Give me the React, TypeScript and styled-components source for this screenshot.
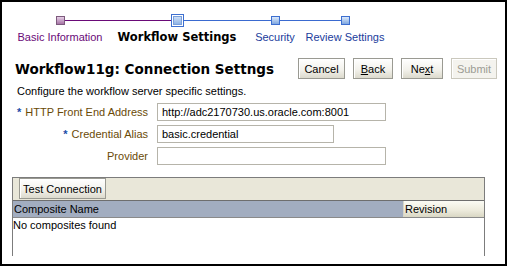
import React from "react";
import styled, { createGlobalStyle } from "styled-components";

const Global = createGlobalStyle`
  html, body { margin: 0; padding: 0; background: #fff; }
  body { font-family: "Liberation Sans", Arial, sans-serif; font-size: 11px; color: #000; }
`;

const Frame = styled.div`
  box-sizing: border-box;
  width: 507px;
  height: 266px;
  border: 2px solid #000;
  background: #fff;
  overflow: hidden;
  display: flex;
  flex-direction: column;
`;

const Train = styled.div`
  display: flex;
  padding: 12px 0 0 10px;
`;

type Kind = "visited" | "current" | "next";

const Step = styled.div<{ $w: number }>`
  width: ${(p) => p.$w}px;
  display: flex;
  flex-direction: column;
  align-items: stretch;
`;

const MarkerRow = styled.div`
  display: flex;
  align-items: center;
  height: 13px;
`;

const Line = styled.div<{ $color?: string }>`
  flex: 1;
  height: 1px;
  background: ${(p) => p.$color || "transparent"};
`;

const Square = styled.div<{ $kind: Kind }>`
  box-sizing: border-box;
  flex: none;
  width: ${(p) => (p.$kind === "current" ? 13 : 9)}px;
  height: ${(p) => (p.$kind === "current" ? 13 : 9)}px;
  border: 1px solid ${(p) => (p.$kind === "visited" ? "#7d5a7d" : "#3d6fd0")};
  background: ${(p) =>
    p.$kind === "visited"
      ? "linear-gradient(#e6d0e6, #a674a6)"
      : "linear-gradient(#dceafb, #7fa7e0)"};
  box-shadow: ${(p) => (p.$kind === "current" ? "inset 0 0 0 1px #fff, inset 0 0 0 2px #7aa0dc" : "none")};
`;

const StepLabel = styled.div<{ $kind: Kind }>`
  display: flex;
  justify-content: center;
  padding-top: 3px;
  white-space: nowrap;
  font-family: ${(p) => (p.$kind === "current" ? '"DejaVu Sans", Verdana, sans-serif' : '"Liberation Sans", Arial, sans-serif')};
  font-weight: ${(p) => (p.$kind === "current" ? "bold" : "normal")};
  font-size: ${(p) => (p.$kind === "current" ? "11.5px" : "11px")};
  line-height: 14px;
  color: ${(p) => (p.$kind === "visited" ? "#6a0a78" : p.$kind === "current" ? "#000" : "#1a3c9c")};
`;

const HeaderRow = styled.div`
  display: flex;
  align-items: center;
  justify-content: space-between;
  padding: 14px 8px 0 13px;
`;

const Title = styled.h1`
  margin: 0;
  font-family: "DejaVu Sans", Verdana, sans-serif;
  font-size: 13.5px;
  font-weight: bold;
  color: #000;
  white-space: nowrap;
`;

const ButtonBar = styled.div`
  display: flex;
  gap: 8px;
`;

const Button = styled.button<{ $w?: number }>`
  box-sizing: border-box;
  height: 21px;
  ${(p) => (p.$w ? `width: ${p.$w}px;` : "")}
  padding: 0 3px;
  white-space: nowrap;
  font-family: "Liberation Sans", Arial, sans-serif;
  font-size: 11px;
  color: ${(p) => (p.disabled ? "#9c9c94" : "#000")};
  background: ${(p) =>
    p.disabled ? "#f4f3ee" : "linear-gradient(#ffffff, #f3f2ec 55%, #dcdacd)"};
  border: 1px solid ${(p) => (p.disabled ? "#cac8bd" : "#9a9a92")};
  box-shadow: inset 1px 1px 0 #fff;
  border-radius: 0;
  cursor: default;
`;

const Description = styled.div`
  padding: 6px 0 0 15px;
  font-size: 11px;
  line-height: 13px;
`;

const Form = styled.div`
  display: grid;
  grid-template-columns: 146px auto;
  column-gap: 9px;
  row-gap: 4px;
  padding-top: 5px;
  align-items: center;
  justify-items: start;
`;

const Label = styled.label`
  justify-self: end;
  font-size: 11px;
  color: #6a4a06;
  white-space: nowrap;
`;

const Req = styled.span`
  color: #1a4ca8;
  font-weight: bold;
  margin-right: 4px;
`;

const Input = styled.input<{ $w: number }>`
  box-sizing: border-box;
  width: ${(p) => p.$w}px;
  height: 18px;
  margin: 0;
  padding: 0 4px;
  border: 1px solid #b6b4aa;
  font-family: "Liberation Sans", Arial, sans-serif;
  font-size: 11px;
  color: #000;
  outline: none;
`;

const Panel = styled.div`
  margin: 12px 0 8px 10px;
  width: 471px;
  flex: 1;
  border: 1px solid #7c7c7c;
  border-bottom: none;
  display: flex;
  flex-direction: column;
`;

const Toolbar = styled.div`
  box-sizing: border-box;
  height: 22px;
  background: #e9e7d9;
  padding: 0 0 0 6px;
  display: flex;
  align-items: flex-start;
`;

const HeadRow = styled.div`
  display: flex;
  height: 16px;
  border-top: 1px solid #6e6e6e;
  border-bottom: 1px solid #8a8a8a;
`;

const HeadCell = styled.div<{ $grow?: boolean; $w?: number }>`
  box-sizing: border-box;
  ${(p) => (p.$grow ? "flex: 1;" : `width: ${p.$w}px;`)}
  padding: 0 1px;
  font-size: 11px;
  line-height: 16px;
  background: ${(p) => (p.$grow ? "#a2adc0" : "linear-gradient(#fbfbf4, #eceadb 60%, #d9d7c4)")};
  ${(p) => (!p.$grow ? "border-left: 1px solid #d8d6c8;" : "")}
`;

const Empty = styled.div`
  font-size: 11px;
  padding-top: 1px;
`;

const steps: { label: string; kind: Kind; left?: string; right?: string; w: number }[] = [
  { label: "Basic Information", kind: "visited", right: "#6a0a78", w: 96 },
  { label: "Workflow Settings", kind: "current", left: "#6a0a78", right: "#3a6ad0", w: 138 },
  { label: "Security", kind: "next", left: "#3a6ad0", right: "#3a6ad0", w: 58 },
  { label: "Review Settings", kind: "next", left: "#3a6ad0", w: 82 },
];

export default function App() {
  return (
    <>
      <Global />
      <Frame>
        <Train>
          {steps.map((s) => (
            <Step key={s.label} $w={s.w}>
              <MarkerRow>
                <Line $color={s.left} />
                <Square $kind={s.kind} />
                <Line $color={s.right} />
              </MarkerRow>
              <StepLabel $kind={s.kind}>{s.label}</StepLabel>
            </Step>
          ))}
        </Train>
        <HeaderRow>
          <Title>Workflow11g: Connection Settngs</Title>
          <ButtonBar>
            <Button $w={47}>Cancel</Button>
            <Button $w={40}><u>B</u>ack</Button>
            <Button $w={42}>Ne<u>x</u>t</Button>
            <Button $w={46} disabled>Submit</Button>
          </ButtonBar>
        </HeaderRow>
        <Description>Configure the workflow server specific settings.</Description>
        <Form>
          <Label><Req>*</Req>HTTP Front End Address</Label>
          <Input $w={229} defaultValue="http://adc2170730.us.oracle.com:8001" />
          <Label><Req>*</Req>Credential Alias</Label>
          <Input $w={177} defaultValue="basic.credential" />
          <Label>Provider</Label>
          <Input $w={229} defaultValue="" />
        </Form>
        <Panel>
          <Toolbar>
            <Button $w={87}>Test Connection</Button>
          </Toolbar>
          <HeadRow>
            <HeadCell $grow>Composite Name</HeadCell>
            <HeadCell $w={81}>Revision</HeadCell>
          </HeadRow>
          <Empty>No composites found</Empty>
        </Panel>
      </Frame>
    </>
  );
}
